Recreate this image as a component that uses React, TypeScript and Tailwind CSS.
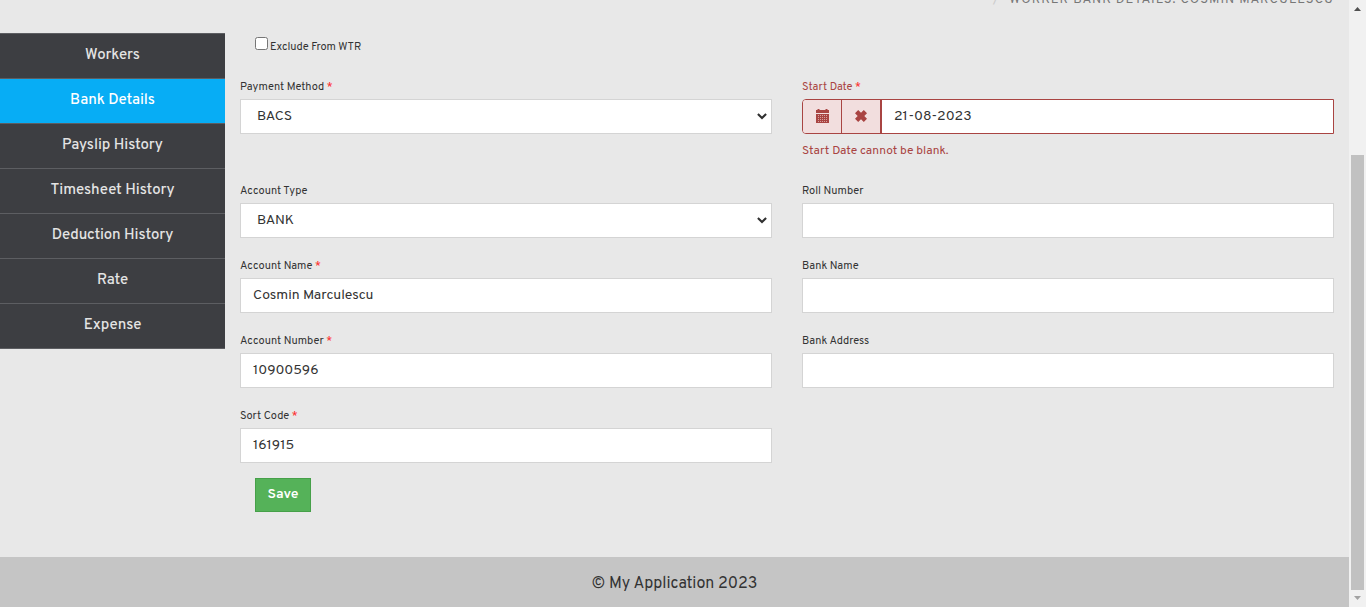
import type { ReactNode } from "react";

const navItems = [
  { label: "Workers" },
  { label: "Bank Details", active: true },
  { label: "Payslip History" },
  { label: "Timesheet History" },
  { label: "Deduction History" },
  { label: "Rate" },
  { label: "Expense" },
];

function Field({ label, required, children }: { label: string; required?: boolean; children: ReactNode }) {
  return (
    <div className="h-[75px]">
      <div className="flex h-[19px] items-start text-[11px] leading-[14px]">
        <span>{label}</span>
        {required && <span className="ml-[2.5px] text-[#ff2020]">*</span>}
      </div>
      {children}
    </div>
  );
}

function TextBox({ value = "" }: { value?: string }) {
  return (
    <input
      defaultValue={value}
      className="block h-[35px] w-full rounded-none border border-[#d4d4d4] bg-white px-3 pb-px text-[14px] text-[#333] outline-none"
    />
  );
}

function SelectBox({ value }: { value: string }) {
  return (
    <div className="flex h-[35px] items-center justify-between border border-[#d4d4d4] bg-white pr-1 pl-4">
      <span className="pt-px text-[14px] leading-[18px] text-[#333]">{value}</span>
      <svg width="10" height="7" viewBox="0 0 10 7" fill="none" stroke="#303030" strokeWidth="2.1">
        <path d="M0.9 1 5 5 9.1 1" />
      </svg>
    </div>
  );
}

function CalendarIcon() {
  return (
    <svg width="13" height="14" viewBox="0 0 13 14" fill="#a94442" className="-mt-px">
      <path d="M0 1h1.5V0h2v1h6V0h2v1H13v3H0z" />
      <path opacity="0.4" d="M1 6h11v7H1z" />
      <path fillRule="evenodd" d="M0 5h13v9H0zM2 6v1h1V6zm2 0v1h1V6zm2 0v1h1V6zm2 0v1h1V6zm2 0v1h1V6zM2 8v1h1V8zm2 0v1h1V8zm2 0v1h1V8zm2 0v1h1V8zm2 0v1h1V8zM2 10v1h1v-1zm2 0v1h1v-1zm2 0v1h1v-1zm2 0v1h1v-1zm2 0v1h1v-1zM2 12v1h1v-1zm2 0v1h1v-1zm2 0v1h1v-1zm2 0v1h1v-1zm2 0v1h1v-1z" />
    </svg>
  );
}

function CrossIcon() {
  return (
    <svg width="12" height="12" viewBox="0 0 12 12" fill="#a94442" className="-mt-px">
      <path d="M3.2 0 6 2.7 8.8 0 12 3.2 9.3 6 12 8.8 8.8 12 6 9.3 3.2 12 0 8.8 2.7 6 0 3.2z" />
    </svg>
  );
}

export default function App() {
  return (
    <div className="flex h-[607px] w-[1366px] overflow-hidden bg-[#e8e8e8] font-['Overpass','Roboto',sans-serif] text-[#333]">
      <div className="flex w-[1349px] flex-col">
        <div className="flex h-[33px] justify-end overflow-hidden pr-[15px] text-[13px] leading-[16px] text-[#777]">
          <div className="-mt-[8px] flex gap-[10px]">
            <span className="text-[#ccc]">/</span>
            <span className="tracking-[1px]">WORKER BANK DETAILS: COSMIN MARCULESCU</span>
          </div>
        </div>

        <div className="flex h-[524px]">
          <nav className="w-[225px] shrink-0">
            <div className="border-b border-[#5d5e62]">
              {navItems.map((item) => (
                <a
                  key={item.label}
                  className={`flex h-[45px] items-center justify-center border-t border-[#5d5e62] pt-px text-[15px] font-medium tracking-[-0.08px] ${
                    item.active ? "bg-[#07adf5] text-white" : "bg-[#3d3e42] text-[#e4e4e4]"
                  }`}
                >
                  {item.label}
                </a>
              ))}
            </div>
          </nav>

          <main className="w-[1124px] pr-[15px] pl-[15px]">
            <div className="flex h-[47px] pt-1 pl-[15px]">
              <input type="checkbox" className="size-[13px] appearance-none rounded-[2.5px] border border-[#767676] bg-white" />
              <span className="mt-[3px] ml-[2px] text-[11px] leading-[14px]">Exclude From WTR</span>
            </div>

            <div className="grid grid-cols-2 gap-x-[30px]">
              <div className="h-[104px]">
                <Field label="Payment Method" required>
                  <SelectBox value="BACS" />
                </Field>
              </div>
              <div className="h-[104px] text-[#a94442]">
                <Field label="Start Date" required>
                  <div className="flex h-[35px] overflow-hidden rounded-l-[4px] border border-[#a94442] bg-white">
                    <button className="flex w-[39px] shrink-0 items-center justify-center border-r border-[#a94442] bg-[#f2dede]">
                      <CalendarIcon />
                    </button>
                    <button className="flex w-[40px] shrink-0 items-center justify-center border-r-2 border-[#a94442] bg-[#f2dede]">
                      <CrossIcon />
                    </button>
                    <input
                      defaultValue="21-08-2023"
                      className="min-w-0 flex-1 bg-white px-3 pb-px text-[14px] text-[#333] outline-none"
                    />
                  </div>
                  <div className="mt-[10px] text-[12px] leading-[14px]">Start Date cannot be blank.</div>
                </Field>
              </div>
              <Field label="Account Type">
                <SelectBox value="BANK" />
              </Field>
              <Field label="Roll Number">
                <TextBox />
              </Field>
              <Field label="Account Name" required>
                <TextBox value="Cosmin Marculescu" />
              </Field>
              <Field label="Bank Name">
                <TextBox />
              </Field>
              <Field label="Account Number" required>
                <TextBox value="10900596" />
              </Field>
              <Field label="Bank Address">
                <TextBox />
              </Field>
              <Field label="Sort Code" required>
                <TextBox value="161915" />
              </Field>
            </div>

            <button className="-mt-[6px] ml-[15px] flex h-[34px] w-[56px] items-center justify-center border border-[#46a049] bg-[#55b259] pb-px text-[14px] font-semibold tracking-[-0.1px] text-white">
              Save
            </button>
          </main>
        </div>

        <footer className="flex h-[50px] items-center justify-center bg-[#c5c5c5] pt-1 text-[16px]">
          © My Application 2023
        </footer>
      </div>

      <div className="flex w-[17px] flex-col items-center bg-[#f1f1f1]">
        <svg width="7" height="4" viewBox="0 0 7 4" className="mt-[7px]" fill="#505050">
          <path d="M0 4 3.5 0 7 4z" />
        </svg>
        <div className="mt-[144px] h-[435px] w-[13px] bg-[#c1c1c1]" />
        <svg width="7" height="4" viewBox="0 0 7 4" className="mt-[6px]" fill="#a3a3a3">
          <path d="M0 0h7L3.5 4z" />
        </svg>
      </div>
    </div>
  );
}
